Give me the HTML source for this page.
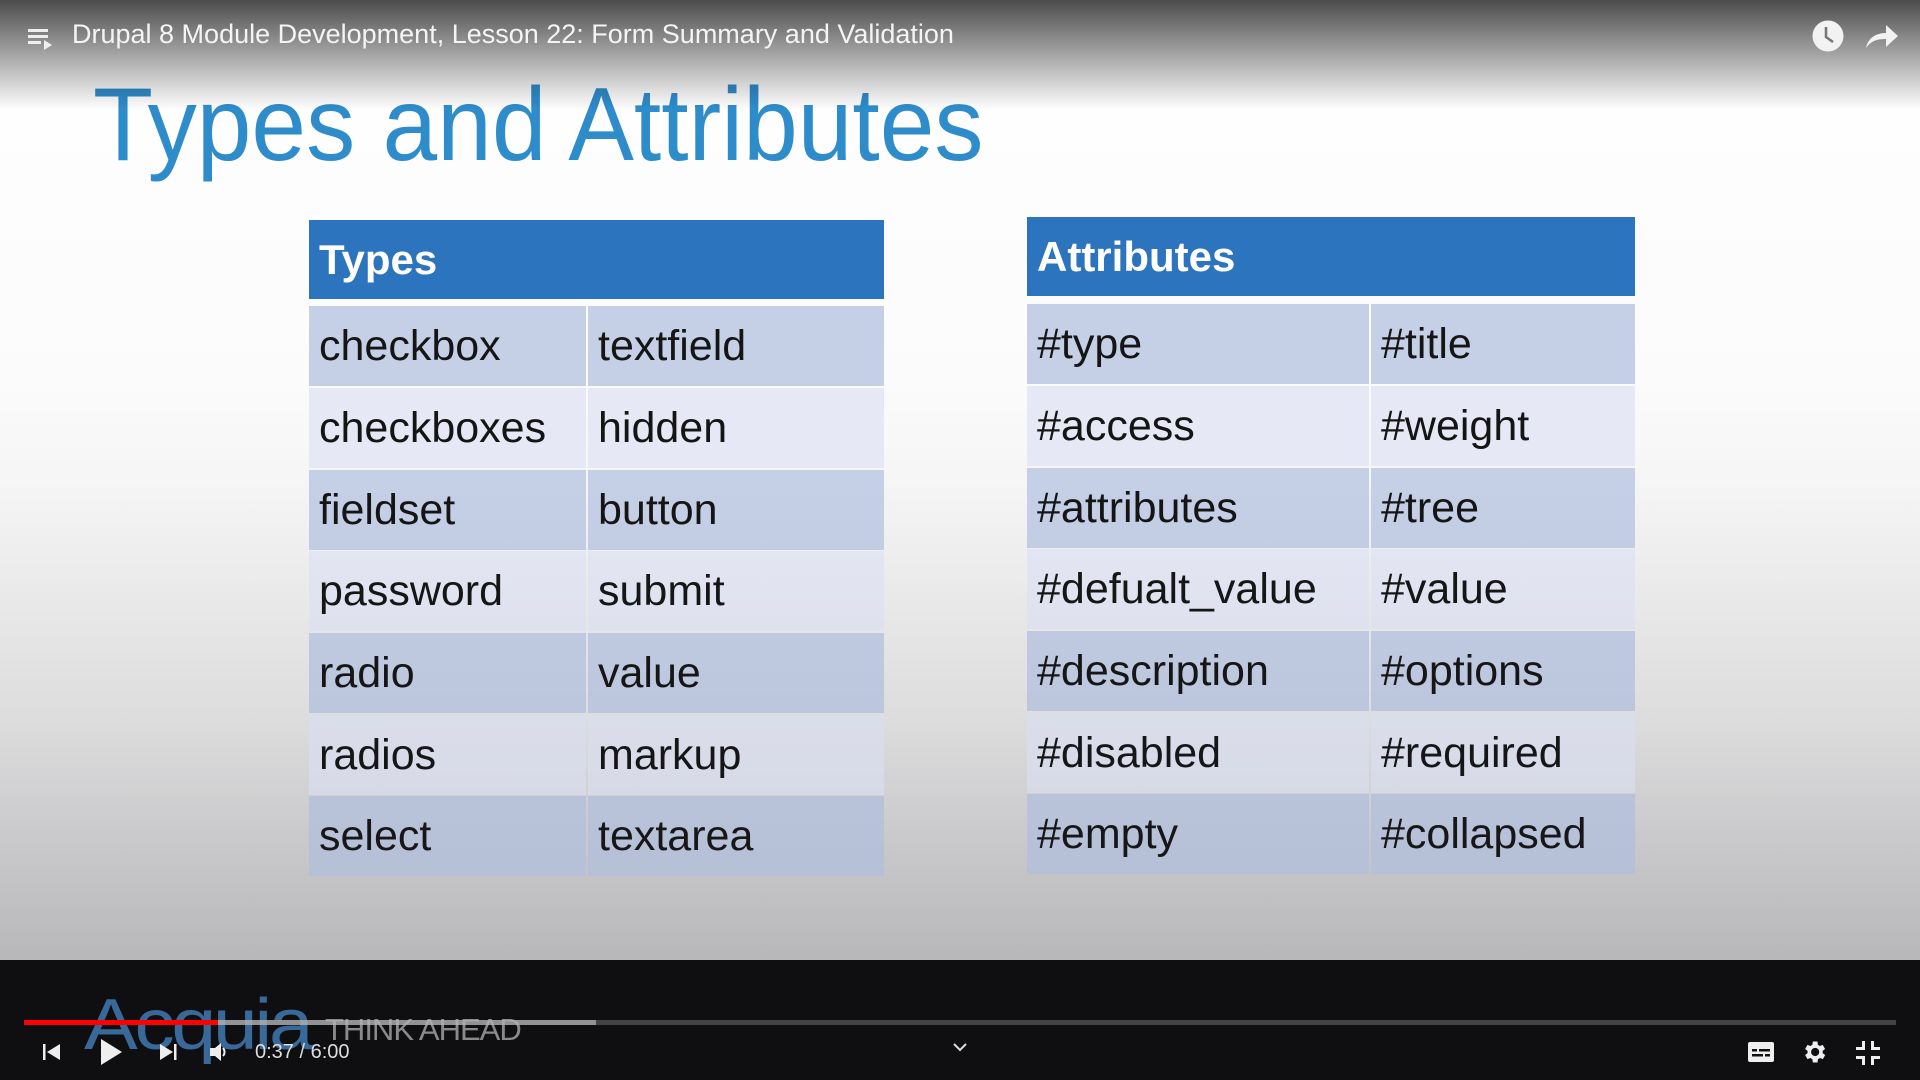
<!DOCTYPE html>
<html><head><meta charset="utf-8"><style>
*{margin:0;padding:0;box-sizing:border-box}
body{width:1920px;height:1080px;overflow:hidden;position:relative;font-family:"Liberation Sans",sans-serif;background:#fff}
.slide{position:absolute;left:0;top:0;width:1920px;height:960px;background:linear-gradient(#ffffff 0%,#fbfbfb 40%,#e8e8e8 75%,#cbcbcb 100%)}
.topbar{position:absolute;left:0;top:0;width:1920px;height:110px;background:linear-gradient(rgba(0,0,0,.7),rgba(0,0,0,0))}
.vtitle{position:absolute;left:72px;top:19px;color:#f4f4f4;font-size:27px;white-space:nowrap}
h1{position:absolute;left:93px;top:66px;font-weight:normal;color:#2f8ccb;font-size:104px;white-space:nowrap;transform:scaleX(.945);transform-origin:left top}
.tbl{position:absolute}
.hd{position:absolute;left:0;right:0;height:79px;background:#2c74bd;color:#fff;font-weight:bold;font-size:42px;padding-left:10px;line-height:79px}
.row{position:absolute;left:0;right:0;height:80px}
.c{position:absolute;top:0;height:80px;font-size:43px;color:#151515;line-height:80px;padding-left:10px}
.shade{position:absolute;left:0;top:0;width:1920px;height:960px;background:linear-gradient(rgba(0,0,0,0) 0%,rgba(0,0,0,0) 50%,rgba(40,40,60,.12) 100%);pointer-events:none}
.bottom{position:absolute;left:0;top:960px;width:1920px;height:120px;background:#0f0e10}
.ctl{position:absolute}
</style></head><body>
<div class="slide"></div>
<h1>Types and Attributes</h1>

<div class="tbl" style="left:309px;top:220px;width:575px">
<div class="hd" style="top:0">Types</div>
</div>
<div class="tbl" style="left:1027px;top:217px;width:608px">
<div class="hd" style="top:0">Attributes</div>
</div>

<div class="tbl" style="left:309px;top:306px;width:575px">
<div class="row" style="top:0"><div class="c" style="left:0;width:277px;background:#c5d0e7">checkbox</div><div class="c" style="left:279px;right:0;background:#c5d0e7">textfield</div></div>
<div class="row" style="top:82px"><div class="c" style="left:0;width:277px;background:#e6e9f5">checkboxes</div><div class="c" style="left:279px;right:0;background:#e6e9f5">hidden</div></div>
<div class="row" style="top:164px"><div class="c" style="left:0;width:277px;background:#c5d0e7">fieldset</div><div class="c" style="left:279px;right:0;background:#c5d0e7">button</div></div>
<div class="row" style="top:245px"><div class="c" style="left:0;width:277px;background:#e6e9f5">password</div><div class="c" style="left:279px;right:0;background:#e6e9f5">submit</div></div>
<div class="row" style="top:327px"><div class="c" style="left:0;width:277px;background:#c5d0e7">radio</div><div class="c" style="left:279px;right:0;background:#c5d0e7">value</div></div>
<div class="row" style="top:409px"><div class="c" style="left:0;width:277px;background:#e6e9f5">radios</div><div class="c" style="left:279px;right:0;background:#e6e9f5">markup</div></div>
<div class="row" style="top:490px"><div class="c" style="left:0;width:277px;background:#c5d0e7">select</div><div class="c" style="left:279px;right:0;background:#c5d0e7">textarea</div></div>
</div>

<div class="tbl" style="left:1027px;top:304px;width:608px">
<div class="row" style="top:0"><div class="c" style="left:0;width:342px;background:#c5d0e7">#type</div><div class="c" style="left:344px;right:0;background:#c5d0e7">#title</div></div>
<div class="row" style="top:82px"><div class="c" style="left:0;width:342px;background:#e6e9f5">#access</div><div class="c" style="left:344px;right:0;background:#e6e9f5">#weight</div></div>
<div class="row" style="top:164px"><div class="c" style="left:0;width:342px;background:#c5d0e7">#attributes</div><div class="c" style="left:344px;right:0;background:#c5d0e7">#tree</div></div>
<div class="row" style="top:245px"><div class="c" style="left:0;width:342px;background:#e6e9f5">#defualt_value</div><div class="c" style="left:344px;right:0;background:#e6e9f5">#value</div></div>
<div class="row" style="top:327px"><div class="c" style="left:0;width:342px;background:#c5d0e7">#description</div><div class="c" style="left:344px;right:0;background:#c5d0e7">#options</div></div>
<div class="row" style="top:409px"><div class="c" style="left:0;width:342px;background:#e6e9f5">#disabled</div><div class="c" style="left:344px;right:0;background:#e6e9f5">#required</div></div>
<div class="row" style="top:490px"><div class="c" style="left:0;width:342px;background:#c5d0e7">#empty</div><div class="c" style="left:344px;right:0;background:#c5d0e7">#collapsed</div></div>
</div>

<div class="shade"></div>

<div class="topbar"></div>
<svg class="ctl" style="left:26px;top:24px" width="30" height="30" viewBox="0 0 30 30"><g fill="#eee"><rect x="2" y="5" width="20" height="3"/><rect x="2" y="11" width="20" height="3"/><rect x="2" y="17" width="13" height="3"/><path d="M18 16l8 5-8 5z"/></g></svg>
<div class="vtitle">Drupal 8 Module Development, Lesson 22: Form Summary and Validation</div>
<svg class="ctl" style="left:1810px;top:18px" width="36" height="36" viewBox="0 0 36 36"><circle cx="18" cy="18" r="15.5" fill="#f2f2f2"/><path d="M16 9v10l7 5" stroke="#777" stroke-width="2.6" fill="none"/></svg>
<svg class="ctl" style="left:1862px;top:20px" width="40" height="32" viewBox="0 0 40 32"><path d="M4 28c2-10 10-15 20-15v-8l12 11-12 11v-8c-9 0-15 2-20 9z" fill="#f2f2f2"/></svg>

<div class="bottom"></div>
<div class="ctl" style="left:84px;top:984px;font-size:72px;color:#3d73a8;letter-spacing:-3px;opacity:.9;transform:scaleX(1.12);transform-origin:left">Acquia</div>
<div class="ctl" style="left:325px;top:1012px;font-size:31px;color:#8a8a8a;letter-spacing:-1px">THINK AHEAD</div>
<div class="ctl" style="left:24px;top:1020px;width:1872px;height:5px;background:rgba(120,120,120,.5)"></div>
<div class="ctl" style="left:24px;top:1020px;width:572px;height:5px;background:rgba(200,200,200,.6)"></div>
<div class="ctl" style="left:24px;top:1020px;width:194px;height:5px;background:#f00"></div>

<svg class="ctl" style="left:40px;top:1040px" width="24" height="24" viewBox="0 0 24 24"><rect x="3" y="4" width="2.5" height="16" fill="#eee"/><path d="M20 4v16L7 12z" fill="#eee"/></svg>
<svg class="ctl" style="left:98px;top:1036px" width="28" height="32" viewBox="0 0 28 32"><path d="M3 3l21 13-21 13z" fill="#eee"/></svg>
<svg class="ctl" style="left:156px;top:1040px" width="24" height="24" viewBox="0 0 24 24"><path d="M4 4v16l13-8z" fill="#eee"/><rect x="18" y="4" width="2.5" height="16" fill="#eee"/></svg>
<svg class="ctl" style="left:208px;top:1042px" width="24" height="20" viewBox="0 0 24 20"><path d="M2 6h5l6-5v18l-6-5H2z" fill="#eee"/><path d="M15 6a6 6 0 0 1 0 8" stroke="#eee" stroke-width="2" fill="none"/></svg>
<div class="ctl" style="left:255px;top:1041px;font-size:20px;color:#ddd">0:37 / 6:00</div>
<svg class="ctl" style="left:952px;top:1042px" width="16" height="12" viewBox="0 0 16 12"><path d="M2 2l6 6 6-6" stroke="#ddd" stroke-width="2" fill="none"/></svg>
<svg class="ctl" style="left:1747px;top:1041px" width="28" height="22" viewBox="0 0 28 22"><rect x="1" y="1" width="26" height="20" rx="2" fill="#eee"/><g fill="#0f0e10"><rect x="5" y="8" width="5" height="2.5"/><rect x="12" y="8" width="11" height="2.5"/><rect x="5" y="13" width="11" height="2.5"/><rect x="18" y="13" width="5" height="2.5"/></g></svg>
<svg class="ctl" style="left:1800px;top:1038px" width="28" height="28" viewBox="0 0 24 24"><path fill="#eee" d="M19.4 13a7.5 7.5 0 0 0 0-2l2.1-1.6-2-3.5-2.5 1a7 7 0 0 0-1.7-1L15 3h-4l-.4 2.9a7 7 0 0 0-1.7 1l-2.5-1-2 3.5L6.5 11a7.5 7.5 0 0 0 0 2l-2.1 1.6 2 3.5 2.5-1a7 7 0 0 0 1.7 1L11 21h4l.4-2.9a7 7 0 0 0 1.7-1l2.5 1 2-3.5zM13 15.5a3.5 3.5 0 1 1 0-7 3.5 3.5 0 0 1 0 7z"/></svg>
<svg class="ctl" style="left:1855px;top:1040px" width="26" height="26" viewBox="0 0 26 26"><g fill="#eee"><path d="M7 1h3v9H1V7h6z"/><path d="M16 1h3v6h6v3h-9z"/><path d="M1 16h9v9H7v-6H1z"/><path d="M16 16h9v3h-6v6h-3z"/></g></svg>
</body></html>
